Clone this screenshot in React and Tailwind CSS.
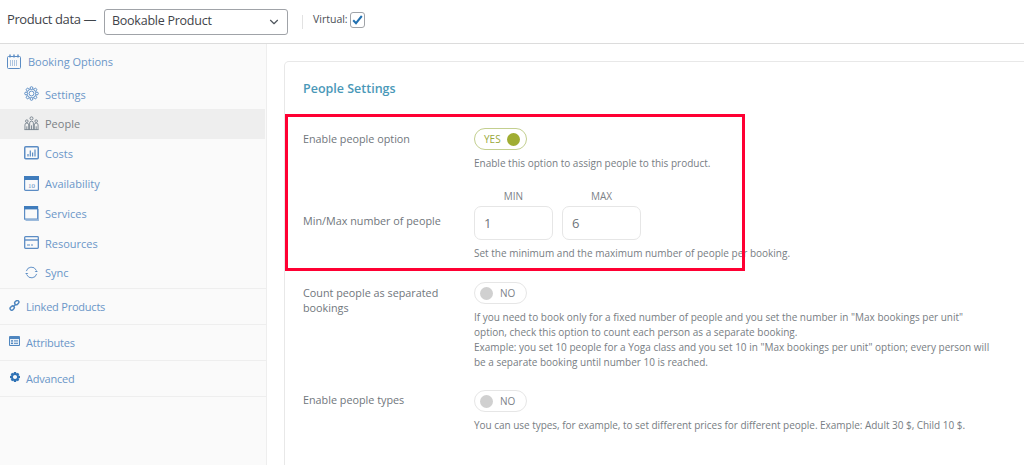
import { ChevronDown } from "lucide-react";

const BLUE = "#5b8cc4";

function CalendarIcon() {
  return (
    <svg width="16" height="16" viewBox="0 0 16 16" fill="none" stroke={BLUE} strokeWidth="1">
      <rect x="1.5" y="2.5" width="13" height="12" rx="1" />
      <path d="M4 0.5v3M8 0.5v3M12 0.5v3" strokeWidth="1.4" />
      <path d="M4.5 6v6M6.5 6v6M8.5 6v6M10.5 6v6" strokeWidth=".8" opacity=".6" />
    </svg>
  );
}

function GearIcon() {
  const teeth = [0, 45, 90, 135, 180, 225, 270, 315];
  return (
    <svg width="15" height="15" viewBox="0 0 16 16" fill="none" stroke={BLUE} strokeWidth="1">
      <circle cx="8" cy="8" r="2.6" />
      <circle cx="8" cy="8" r="5" />
      {teeth.map((a) => (
        <circle key={a} cx="8" cy="2.2" r="1.5" transform={`rotate(${a} 8 8)`} fill="#fafafa" />
      ))}
    </svg>
  );
}

function PeopleIcon() {
  return (
    <svg width="15" height="15" viewBox="0 0 16 16" fill="none" stroke="#6d7a86" strokeWidth=".9">
      <circle cx="8" cy="2.5" r="1.6" />
      <circle cx="3" cy="5.5" r="1.4" />
      <circle cx="13" cy="5.5" r="1.4" />
      <path d="M1 14.5v-5a2 2 0 0 1 4 0v5M6 14.5v-7a2 2 0 0 1 4 0v7M11 14.5v-5a2 2 0 0 1 4 0v5M.5 14.5h15M3 11v3.5M8 10v4.5M13 11v3.5" />
    </svg>
  );
}

function CostsIcon() {
  return (
    <svg width="15" height="14" viewBox="0 0 15 14" fill="none" stroke={BLUE}>
      <rect x=".75" y=".75" width="13.5" height="12" rx="1" strokeWidth="1.5" />
      <path d="M4 10.5V8M6.3 10.5V4.5M8.6 10.5V6.5M11 10.5V3.5" strokeWidth="1.2" />
    </svg>
  );
}

function AvailabilityIcon() {
  return (
    <svg width="15" height="15" viewBox="0 0 15 15" fill="none">
      <rect x=".6" y=".6" width="13.8" height="13.8" rx="1" stroke={BLUE} strokeWidth="1.2" />
      <rect x="0" y="0" width="15" height="4" fill="#3f7cbc" />
      <text x="7.5" y="12" textAnchor="middle" fontSize="7" fill={BLUE} fontFamily="Liberation Serif, serif">10</text>
    </svg>
  );
}

function ServicesIcon() {
  return (
    <svg width="15" height="15" viewBox="0 0 15 15" fill="none">
      <rect x=".6" y=".6" width="13" height="12.5" stroke={BLUE} strokeWidth="1.2" />
      <rect x="0" y="0" width="14" height="3.4" fill="#3f7cbc" />
      <path d="M1.5 14.3h13V3" stroke="#9dbbdc" strokeWidth="1.2" />
    </svg>
  );
}

function ResourcesIcon() {
  return (
    <svg width="15" height="13" viewBox="0 0 15 13" fill="none" stroke={BLUE}>
      <rect x=".7" y=".7" width="13.6" height="11.6" rx=".8" strokeWidth="1.3" />
      <path d="M1 4h13" strokeWidth="1.4" />
      <path d="M3 9h3M7 9h2" strokeWidth="1.2" />
    </svg>
  );
}

function SyncIcon() {
  return (
    <svg width="15" height="15" viewBox="0 0 16 16" fill="none" stroke={BLUE} strokeWidth="1">
      <path d="M2.5 6.5A5.6 5.6 0 0 1 13 5.5" />
      <path d="M13.5 9.5A5.6 5.6 0 0 1 3 10.5" />
      <path d="M14.8 7.5h-3.4l1.7-2z" fill={BLUE} stroke="none" />
      <path d="M1.2 8.5h3.4l-1.7 2z" fill={BLUE} stroke="none" />
    </svg>
  );
}

function LinkIcon() {
  return (
    <svg width="11" height="11" viewBox="0 0 12 12" fill="none" stroke="#4f86bf" strokeWidth="1.6">
      <rect x="6" y="1" width="5" height="3.6" rx="1.8" transform="rotate(-45 8.5 2.8)" />
      <rect x="1" y="7" width="5" height="3.6" rx="1.8" transform="rotate(-45 3.5 8.8)" />
      <path d="M4.6 7.4l2.8-2.8" />
    </svg>
  );
}

function AttributesIcon() {
  return (
    <svg width="11" height="10" viewBox="0 0 11 10">
      <rect width="11" height="10" rx="1" fill="#4f86bf" />
      <rect x="1" y="3" width="9" height="6" fill="#e9f0f7" />
      <rect x="2" y="4.2" width="2" height="1.4" fill="#4f86bf" />
      <rect x="2" y="6.6" width="2" height="1.4" fill="#4f86bf" />
      <rect x="5" y="4.4" width="4" height="1" fill="#4f86bf" />
      <rect x="5" y="6.8" width="4" height="1" fill="#4f86bf" />
    </svg>
  );
}

function AdvancedIcon() {
  const teeth = [0, 45, 90, 135, 180, 225, 270, 315];
  return (
    <svg width="10" height="10" viewBox="0 0 12 12">
      {teeth.map((a) => (
        <rect key={a} x="4.6" y="0" width="2.8" height="3" fill="#2f72b5" transform={`rotate(${a} 6 6)`} />
      ))}
      <circle cx="6" cy="6" r="3.6" fill="none" stroke="#2f72b5" strokeWidth="2.2" />
    </svg>
  );
}

const subItems = [
  { label: "Settings", icon: <GearIcon /> },
  { label: "People", icon: <PeopleIcon />, active: true },
  { label: "Costs", icon: <CostsIcon /> },
  { label: "Availability", icon: <AvailabilityIcon /> },
  { label: "Services", icon: <ServicesIcon /> },
  { label: "Resources", icon: <ResourcesIcon /> },
  { label: "Sync", icon: <SyncIcon /> },
];

const mainItems = [
  { label: "Linked Products", icon: <LinkIcon /> },
  { label: "Attributes", icon: <AttributesIcon /> },
  { label: "Advanced", icon: <AdvancedIcon /> },
];

function Sidebar() {
  return (
    <aside className="w-[267px] shrink-0 border-r border-[#eeeeee] bg-[#fafafa] text-[11px]">
      <div className="h-[245px] border-b border-[#eeeeee]">
        <div className="flex h-[35px] items-center gap-[6px] pl-[6px]">
          <CalendarIcon />
          <span className="pt-[2px] text-[#6a96c8]">Booking Options</span>
        </div>
        {subItems.map((item) => (
          <div
            key={item.label}
            className={`flex h-[29.8px] w-[265px] items-center ${item.active ? "bg-[#eeeeee] text-[#7a7f85]" : "text-[#6a96c8]"}`}
          >
            <span className="flex w-[45px] shrink-0 pl-[24px]">{item.icon}</span>
            <span className="pt-[2px]">{item.label}</span>
          </div>
        ))}
      </div>
      {mainItems.map((item) => (
        <div key={item.label} className="flex h-[36px] items-center border-b border-[#eeeeee]">
          <span className="flex w-[26px] shrink-0 justify-center pl-[3px] pb-[3px]">{item.icon}</span>
          <span className="pt-[2px] tracking-[-0.02em] text-[#6a96c8]">{item.label}</span>
        </div>
      ))}
    </aside>
  );
}

function Toggle({ on }) {
  if (on) {
    return (
      <div className="flex h-[22px] w-[53px] items-center justify-between rounded-full border border-[#c3cf8f] pl-[9px] pr-[6px] text-[10px] font-medium text-[#9aa83a]">
        <span>YES</span>
        <span className="h-[13px] w-[13px] rounded-full bg-[#a0ad32]" />
      </div>
    );
  }
  return (
    <div className="flex h-[22px] w-[53px] items-center gap-[7px] rounded-full border border-[#e6e6e6] pl-[5px] text-[10px] font-medium text-[#7c8288]">
      <span className="h-[13px] w-[13px] rounded-full bg-[#d0d0d0]" />
      <span>NO</span>
    </div>
  );
}

function NumberBox({ label, value }) {
  return (
    <div className="w-[79px]">
      <div className="h-[16px] text-center text-[10px] leading-[12px] text-[#7c8288]">{label}</div>
      <div className="flex h-[34px] items-center rounded-[7px] border border-[#e6e6e6] pl-[9px] text-[13px] text-[#6f757b]">
        {value}
      </div>
    </div>
  );
}

function Row({ label, className, labelClass, children }) {
  return (
    <div className={`flex ${className}`}>
      <div className={`w-[171px] shrink-0 pr-[8px] text-[10.8px] leading-[15px] text-[#70767c] ${labelClass}`}>
        {label}
      </div>
      <div className="min-w-0 flex-1 text-[10px] leading-[15px] text-[#777d83]">{children}</div>
    </div>
  );
}

export default function App() {
  return (
    <div
      className="relative h-[465px] w-[1024px] overflow-hidden bg-white"
      style={{ fontFamily: '"Open Sans", sans-serif' }}
    >
      <header className="flex h-[44px] items-center border-b border-[#dcdcdc] pl-[7px]">
        <span className="mr-[9px] w-[88px] whitespace-nowrap pb-[3px] text-[13px] font-medium tracking-[-0.03em] text-[#3f444a]">
          Product data —
        </span>
        <div className="flex h-[26px] w-[184px] items-center justify-between rounded-[3px] border border-[#a0a3a8] pl-[7px] pr-[6px] text-[12.5px] font-medium tracking-[-0.02em] text-[#3f444a]">
          <span>Bookable Product</span>
          <ChevronDown size={14} strokeWidth={2} className="text-[#50575e]" />
        </div>
        <span className="ml-[14px] h-[14px] w-px bg-[#e2e2e2]" />
        <span className="ml-[10px] pb-[3px] text-[10.5px] font-medium text-[#4b5056]">Virtual:</span>
        <span className="mb-[3px] ml-[2px] flex h-[16px] w-[15px] items-center justify-center rounded-[3px] border border-[#a0a3a8]">
          <svg width="11" height="10" viewBox="0 0 11 10" fill="none" stroke="#2271b1" strokeWidth="2">
            <path d="M1.2 5.2l2.8 3L9.8 1" />
          </svg>
        </span>
      </header>

      <div className="flex h-[421px]">
        <Sidebar />
        <section className="ml-[17px] mt-[17px] w-[760px] shrink-0 rounded-t-[5px] border border-b-0 border-[#e8e8e8] pl-[18px]">
          <h2 className="mt-[18px] text-[12.5px] font-semibold leading-[18px] text-[#4a98b8]">People Settings</h2>

          <Row label="Enable people option" labelClass="pt-[3px]" className="mt-[30px] items-start">
            <Toggle on />
            <p className="mt-[6px]">Enable this option to assign people to this product.</p>
          </Row>

          <div className="mt-[19px] flex">
            <div className="w-[171px] shrink-0 pt-[23px] text-[10.8px] leading-[15px] text-[#70767c]">
              Min/Max number of people
            </div>
            <div className="text-[10px] leading-[15px] text-[#777d83]">
              <div className="flex gap-[9px]">
                <NumberBox label="MIN" value="1" />
                <NumberBox label="MAX" value="6" />
              </div>
              <p className="mt-[6px]">Set the minimum and the maximum number of people per booking.</p>
            </div>
          </div>

          <Row label="Count people as separated bookings" labelClass="pt-[3px]" className="mt-[21px]">
            <Toggle />
            <p className="mt-[6px] w-[518px]">
              If you need to book only for a fixed number of people and you set the number in "Max bookings per unit"
              option, check this option to count each person as a separate booking.
              <br />
              Example: you set 10 people for a Yoga class and you set 10 in "Max bookings per unit" option; every person
              will be a separate booking until number 10 is reached.
            </p>
          </Row>

          <Row label="Enable people types" labelClass="pt-[2px]" className="mt-[20px]">
            <Toggle />
            <p className="mt-[6px] whitespace-nowrap tracking-[-0.03px]">
              You can use types, for example, to set different prices for different people. Example: Adult 30 $, Child
              10 $.
            </p>
          </Row>
        </section>
      </div>

      {/* red highlight drawn over the screenshot */}
      <div className="absolute left-[285px] top-[114px] h-[157px] w-[460px] border-[3px] border-[#ff0033]" />
    </div>
  );
}
